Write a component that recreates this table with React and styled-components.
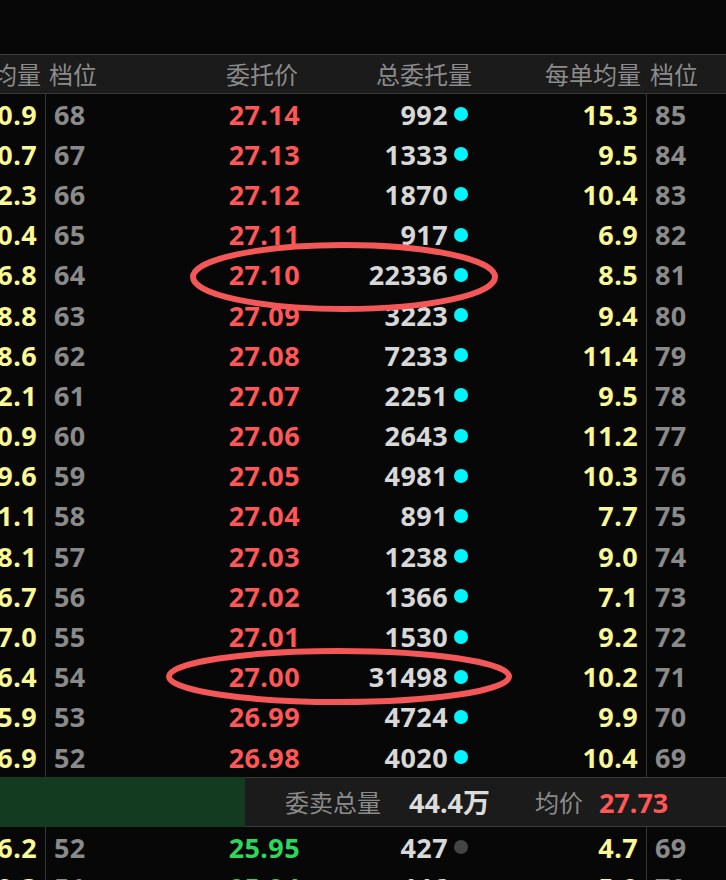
import React from "react";
import styled, { createGlobalStyle } from "styled-components";

const GlobalStyle = createGlobalStyle`
  html, body { margin: 0; padding: 0; background: #070707; overflow: hidden; }
  body { width: 726px; height: 880px; }
`;

const FONT = `"Noto Sans", "Noto Sans CJK SC", sans-serif`;

const Viewport = styled.div`
  position: relative;
  width: 726px;
  height: 880px;
  overflow: hidden;
  background: #070707;
  font-family: ${FONT};
`;

const TopSpace = styled.div`
  height: 54px;
  border-bottom: 1px solid #3a3a3a;
`;

const Board = styled.div`
  margin-left: -60px;
  width: 786px;
`;

const cols = "106px 124px 130px 148px 27px 172px 1fr";

const HeaderRow = styled.div`
  display: grid;
  grid-template-columns: ${cols};
  height: 38px;
  align-items: center;
  background: #1b1b1b;
  border-bottom: 1px solid #3a3a3a;
  color: #8b8b8b;
  font-size: 24px;
  font-family: "Noto Sans CJK SC", sans-serif;
  line-height: 1;
`;

const HCell = styled.div`
  box-sizing: border-box;
  white-space: nowrap;
  text-align: ${(p) => (p.$left ? "left" : "right")};
  padding-left: ${(p) => p.$pl || 0}px;
  padding-right: ${(p) => p.$pr || 0}px;
  grid-column: ${(p) => (p.$span ? `span ${p.$span}` : "auto")};
`;

const Row = styled.div`
  display: grid;
  grid-template-columns: ${cols};
  height: 40.2px;
  align-items: stretch;
  font-size: 27px;
  font-weight: 700;
  letter-spacing: 0.4px;
  line-height: 1;
`;

const Cell = styled.div`
  box-sizing: border-box;
  display: flex;
  align-items: center;
  justify-content: ${(p) => (p.$left ? "flex-start" : "flex-end")};
  white-space: nowrap;
  color: ${(p) => p.$color || "#d8d8d8"};
  padding-left: ${(p) => p.$pl || 0}px;
  padding-right: ${(p) => p.$pr || 0}px;
  border-right: ${(p) => (p.$sep ? "1px solid #363636" : "none")};
  overflow: hidden;
`;

const DotCell = styled.div`
  display: flex;
  align-items: center;
  padding-left: 6px;
`;

const Dot = styled.span`
  display: block;
  width: 14px;
  height: 14px;
  border-radius: 50%;
  background: ${(p) => p.$color};
`;

const SummaryBar = styled.div`
  display: flex;
  height: 50px;
`;

const GreenBlock = styled.div`
  width: 305px;
  background: #133b1f;
  flex: none;
`;

const SummaryInfo = styled.div`
  flex: 1;
  display: flex;
  align-items: center;
  background: #1b1b1b;
  border-top: 1px solid #3a3a3a;
  border-bottom: 1px solid #3a3a3a;
  padding-left: 40px;
  line-height: 1;
`;

const SumLabel = styled.span`
  font-family: "Noto Sans CJK SC", sans-serif;
  font-size: 24px;
  color: #8b8b8b;
  margin-left: ${(p) => p.$ml || 0}px;
`;

const SumValue = styled.span`
  font-family: ${FONT};
  font-size: 27px;
  font-weight: 700;
  color: ${(p) => p.$color};
  margin-left: ${(p) => p.$ml || 0}px;
`;

const Overlay = styled.svg`
  position: absolute;
  left: 0;
  top: 0;
  pointer-events: none;
`;

const COLORS = {
  yellow: "#fbf995",
  gray: "#8a8a8a",
  red: "#ff5656",
  white: "#d8d8d8",
  green: "#2fd65c",
  cyan: "#00f6ff",
  darkDot: "#444444",
};

const asks = [
  ["10.9", "68", "27.14", "992", "15.3", "85"],
  ["10.7", "67", "27.13", "1333", "9.5", "84"],
  ["12.3", "66", "27.12", "1870", "10.4", "83"],
  ["10.4", "65", "27.11", "917", "6.9", "82"],
  ["16.8", "64", "27.10", "22336", "8.5", "81"],
  ["8.8", "63", "27.09", "3223", "9.4", "80"],
  ["8.6", "62", "27.08", "7233", "11.4", "79"],
  ["12.1", "61", "27.07", "2251", "9.5", "78"],
  ["10.9", "60", "27.06", "2643", "11.2", "77"],
  ["9.6", "59", "27.05", "4981", "10.3", "76"],
  ["11.1", "58", "27.04", "891", "7.7", "75"],
  ["8.1", "57", "27.03", "1238", "9.0", "74"],
  ["6.7", "56", "27.02", "1366", "7.1", "73"],
  ["7.0", "55", "27.01", "1530", "9.2", "72"],
  ["6.4", "54", "27.00", "31498", "10.2", "71"],
  ["5.9", "53", "26.99", "4724", "9.9", "70"],
  ["6.9", "52", "26.98", "4020", "10.4", "69"],
];

const bids = [
  ["6.2", "52", "25.95", "427", "4.7", "69"],
  ["9.3", "51", "25.94", "446", "5.2", "70"],
];

function BookRow({ data, priceColor, dotColor }) {
  const [avgL, lvlL, price, vol, avgR, lvlR] = data;
  return (
    <Row>
      <Cell $color={COLORS.yellow} $pr={8} $sep>{avgL}</Cell>
      <Cell $left $pl={8} $color={COLORS.gray}>{lvlL}</Cell>
      <Cell $color={priceColor}>{price}</Cell>
      <Cell $color={COLORS.white}>{vol}</Cell>
      <DotCell><Dot $color={dotColor} /></DotCell>
      <Cell $color={COLORS.yellow} $pr={8} $sep>{avgR}</Cell>
      <Cell $left $pl={8} $color={COLORS.gray}>{lvlR}</Cell>
    </Row>
  );
}

export default function App() {
  return (
    <>
      <GlobalStyle />
      <Viewport>
        <TopSpace />
        <Board>
          <HeaderRow>
            <HCell $pr={5}>每单均量</HCell>
            <HCell $left $pl={3}>档位</HCell>
            <HCell $pr={2}>委托价</HCell>
            <HCell $span={2} $pr={3}>总委托量</HCell>
            <HCell $pr={6}>每单均量</HCell>
            <HCell $left $pl={3}>档位</HCell>
          </HeaderRow>
          {asks.map((r, i) => (
            <BookRow key={i} data={r} priceColor={COLORS.red} dotColor={COLORS.cyan} />
          ))}
          <SummaryBar>
            <GreenBlock />
            <SummaryInfo>
              <SumLabel>委卖总量</SumLabel>
              <SumValue $color="#dcdcdc" $ml={28}>44.4万</SumValue>
              <SumLabel $ml={45}>均价</SumLabel>
              <SumValue $color={COLORS.red} $ml={16}>27.73</SumValue>
            </SummaryInfo>
          </SummaryBar>
          {bids.map((r, i) => (
            <BookRow key={i} data={r} priceColor={COLORS.green} dotColor={COLORS.darkDot} />
          ))}
        </Board>
        <Overlay width="726" height="880" viewBox="0 0 726 880">
          <ellipse cx="344" cy="277" rx="151" ry="32" fill="none" stroke="#f45757" strokeWidth="6" />
          <ellipse cx="339" cy="676.5" rx="170" ry="25.5" fill="none" stroke="#f45757" strokeWidth="6" />
        </Overlay>
      </Viewport>
    </>
  );
}
